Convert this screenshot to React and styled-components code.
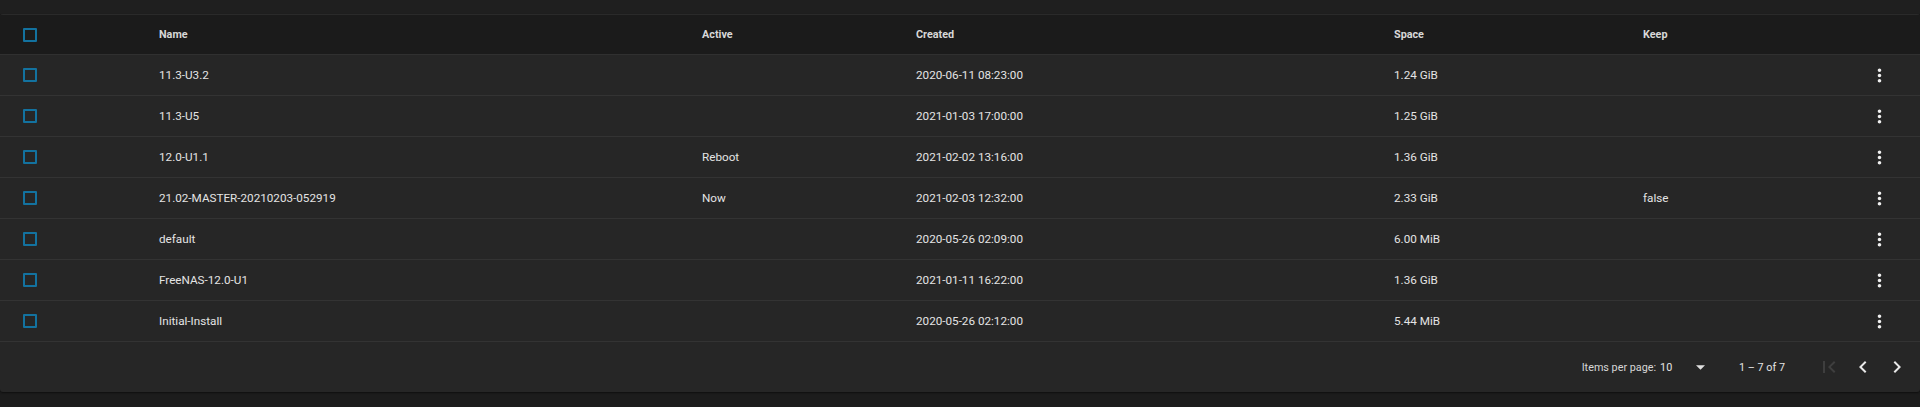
import React from 'react'
import styled, { createGlobalStyle } from 'styled-components'

const Global = createGlobalStyle`
  html, body {
    margin: 0;
    padding: 0;
    background: #1c1c1c;
    font-family: Roboto, 'Liberation Sans', sans-serif;
    color: #e6e6e6;
  }
`

const Page = styled.div`
  width: 1920px;
  height: 407px;
  padding-top: 14px;
  box-sizing: border-box;
  background: linear-gradient(#1f1f1f 0, #1f1f1f 14px, #1c1c1c 14px);
`

const Card = styled.div`
  background: #262626;
  border-radius: 3px;
  box-shadow: 0 1px 2px rgba(0,0,0,0.5);
  overflow: hidden;
`

// check, name, active, created, space, keep, actions
const COLS = '159px 543px 214px 478px 249px 195px 82px'

const HeadRow = styled.div`
  display: grid;
  grid-template-columns: ${COLS};
  height: 41px;
  align-items: center;
  background: #1b1b1b;
  border-top: 1px solid #2a2a2a;
  border-bottom: 1px solid #303030;
  box-sizing: border-box;
  font-size: 10.8px;
  font-weight: 700;
  color: #d8d8d8;
`

const Row = styled.div`
  display: grid;
  grid-template-columns: ${COLS};
  height: 41px;
  align-items: center;
  border-bottom: 1px solid #333333;
  box-sizing: border-box;
  font-size: 11.7px;
  color: #e4e4e4;
`

const CheckCell = styled.div`
  padding-left: 23px;
  display: flex;
  align-items: center;
`

const Box = styled.span`
  width: 14px;
  height: 14px;
  box-sizing: border-box;
  border: 2px solid #13729f;
  border-radius: 1px;
`

const Cell = styled.div`
  white-space: nowrap;
`

const ActionCell = styled.div`
  display: flex;
  justify-content: center;
  color: #f0f0f0;
`

const Footer = styled.div`
  display: flex;
  align-items: center;
  justify-content: flex-end;
  height: 50px;
  padding-right: 6px;
  font-size: 10.8px;
  color: #d6d6d6;
`

const PerPage = styled.span`
  margin-right: 4px;
`

const Select = styled.div`
  display: flex;
  align-items: center;
  width: 45px;
  justify-content: space-between;
  color: #e4e4e4;
`

const Range = styled.span`
  margin: 0 27px 0 34px;
  color: #e4e4e4;
`

const IconButton = styled.button`
  width: 34px;
  height: 34px;
  padding: 0;
  border: none;
  background: none;
  display: flex;
  align-items: center;
  justify-content: center;
  color: ${p => (p.disabled ? '#3e3e3e' : '#e8e8e8')};
`

const MoreVert = () => (
  <svg width="21" height="21" viewBox="0 0 24 24" fill="currentColor">
    <path d="M12 8c1.1 0 2-.9 2-2s-.9-2-2-2-2 .9-2 2 .9 2 2 2zm0 2c-1.1 0-2 .9-2 2s.9 2 2 2 2-.9 2-2-.9-2-2-2zm0 6c-1.1 0-2 .9-2 2s.9 2 2 2 2-.9 2-2-.9-2-2-2z" />
  </svg>
)

const Icon = ({ d }) => (
  <svg width="24" height="24" viewBox="0 0 24 24" fill="currentColor">
    <path d={d} />
  </svg>
)

const rows = [
  ['11.3-U3.2', '', '2020-06-11 08:23:00', '1.24 GiB', ''],
  ['11.3-U5', '', '2021-01-03 17:00:00', '1.25 GiB', ''],
  ['12.0-U1.1', 'Reboot', '2021-02-02 13:16:00', '1.36 GiB', ''],
  ['21.02-MASTER-20210203-052919', 'Now', '2021-02-03 12:32:00', '2.33 GiB', 'false'],
  ['default', '', '2020-05-26 02:09:00', '6.00 MiB', ''],
  ['FreeNAS-12.0-U1', '', '2021-01-11 16:22:00', '1.36 GiB', ''],
  ['Initial-Install', '', '2020-05-26 02:12:00', '5.44 MiB', ''],
]

export default function App() {
  return (
    <Page>
      <Global />
      <Card>
        <HeadRow>
          <CheckCell><Box /></CheckCell>
          <Cell>Name</Cell>
          <Cell>Active</Cell>
          <Cell>Created</Cell>
          <Cell>Space</Cell>
          <Cell>Keep</Cell>
          <Cell />
        </HeadRow>
        {rows.map(r => (
          <Row key={r[0]}>
            <CheckCell><Box /></CheckCell>
            {r.map((v, i) => <Cell key={i}>{v}</Cell>)}
            <ActionCell><MoreVert /></ActionCell>
          </Row>
        ))}
        <Footer>
          <PerPage>Items per page:</PerPage>
          <Select>
            <span>10</span>
            <svg width="9" height="5" viewBox="0 0 10 5" fill="#e0e0e0"><path d="M0 0l5 5 5-5z" /></svg>
          </Select>
          <Range>1 – 7 of 7</Range>
          <IconButton disabled><Icon d="M18.41 16.59L13.82 12l4.59-4.59L17 6l-6 6 6 6zM6 6h2v12H6z" /></IconButton>
          <IconButton><Icon d="M15.41 7.41L14 6l-6 6 6 6 1.41-1.41L10.83 12z" /></IconButton>
          <IconButton><Icon d="M10 6L8.59 7.41 13.17 12l-4.58 4.59L10 18l6-6z" /></IconButton>
        </Footer>
      </Card>
    </Page>
  )
}
